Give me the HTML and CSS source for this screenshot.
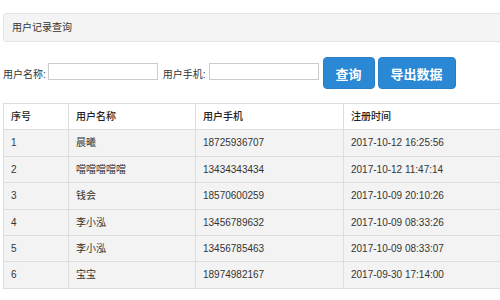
FILE: index.html
```html
<!doctype html>
<html>
  <head>
    <meta charset="UTF-8" />
    <link rel="stylesheet" href="styles.css">
  </head>
  <body>
    <div class="page">
      <div class="panel">用户记录查询</div>
      <div class="search">
        <label>用户名称:</label>
        <input type="text" class="field" />
        <label class="second">用户手机:</label>
        <input type="text" class="field" />
        <button class="btn first">查询</button>
        <button class="btn">导出数据</button>
      </div>
      <table class="records">
        <thead>
          <tr>
            <th class="c-no">序号</th>
            <th class="c-name">用户名称</th>
            <th class="c-phone">用户手机</th>
            <th class="c-time">注册时间</th>
          </tr>
        </thead>
        <tbody>
          <tr><td>1</td><td>晨曦</td><td>18725936707</td><td>2017-10-12 16:25:56</td></tr>
          <tr><td>2</td><td>噹噹噹噹噹</td><td>13434343434</td><td>2017-10-12 11:47:14</td></tr>
          <tr><td>3</td><td>钱会</td><td>18570600259</td><td>2017-10-09 20:10:26</td></tr>
          <tr><td>4</td><td>李小泓</td><td>13456789632</td><td>2017-10-09 08:33:26</td></tr>
          <tr><td>5</td><td>李小泓</td><td>13456785463</td><td>2017-10-09 08:33:07</td></tr>
          <tr><td>6</td><td>宝宝</td><td>18974982167</td><td>2017-09-30 17:14:00</td></tr>
        </tbody>
      </table>
    </div>
  </body>
</html>
```

FILE: styles.css
```css
html,
body {
  margin: 0;
  background: #fff;
  color: #333;
  font-family: "Liberation Sans", "Noto Sans CJK SC", sans-serif;
  font-size: 10px;
  overflow: hidden;
}
.page {
  width: 600px;
  padding: 13px 0 0 3px;
}
.panel {
  background: #f4f4f4;
  border: 1px solid #e3e3e3;
  border-radius: 3px;
  height: 27px;
  line-height: 27px;
  padding-left: 8px;
}
.search {
  display: flex;
  align-items: center;
  margin-top: 15px;
  height: 32px;
}
.search label {
  margin-right: 2px;
}
.search .second {
  margin-left: 5px;
  margin-right: 3px;
}
.field {
  width: 110px;
  height: 17px;
  box-sizing: border-box;
  border: 1px solid #ccc;
  margin: 0 0 3px 0;
  padding: 0 4px;
}
.btn {
  height: 32px;
  padding: 0 12px;
  margin-left: 3px;
  border: 1px solid #2a7fc4;
  border-radius: 4px;
  background: #2b88d4;
  color: #fff;
  font-family: "Noto Sans CJK SC", sans-serif;
  font-size: 13px;
  font-weight: bold;
}
.btn.first {
  margin-left: 4px;
}
.records {
  margin-top: 14px;
  border-collapse: collapse;
  width: 560px;
}
.records th,
.records td {
  border: 1px solid #ddd;
  padding: 6px 7px;
  line-height: 13.4px;
  text-align: left;
}
.records th {
  font-weight: 500;
  color: #222;
  background: #fff;
}
.records tbody tr {
  background: #f3f3f3;
}
.c-no {
  width: 50px;
}
.c-name {
  width: 112px;
}
.c-phone {
  width: 133px;
}
```
